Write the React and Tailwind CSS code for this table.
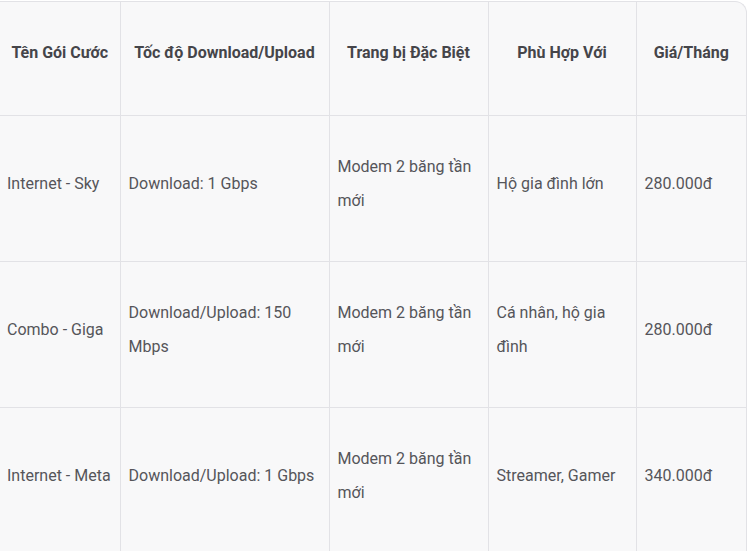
import React from 'react';

// --- TABLE DATA ---
const HEADERS = ['Tên Gói Cước', 'Tốc độ Download/Upload', 'Trang bị Đặc Biệt', 'Phù Hợp Với', 'Giá/Tháng'];

const ROWS = [
    ['Internet - Sky', 'Download: 1 Gbps', 'Modem 2 băng tần mới', 'Hộ gia đình lớn', '280.000đ'],
    ['Combo - Giga', 'Download/Upload: 150 Mbps', 'Modem 2 băng tần mới', 'Cá nhân, hộ gia đình', '280.000đ'],
    ['Internet - Meta', 'Download/Upload: 1 Gbps', 'Modem 2 băng tần mới', 'Streamer, Gamer', '340.000đ'],
];

const COL_WIDTHS = ['w-[120px]', 'w-[209px]', 'w-[159px]', 'w-[148px]', 'w-[110px]'];

const App = () => {
    return (
        <div className="w-[752px] h-[551px] bg-white overflow-hidden pt-px" style={{ fontFamily: 'Roboto, "Noto Sans", sans-serif' }}>
            <div className="w-[747px] bg-[#f8f8f9] border-t border-r border-[#e2e2e6] rounded-tr-xl overflow-hidden">
                <table className="w-[746px] border-collapse table-fixed">
                    <colgroup>
                        {COL_WIDTHS.map((w, i) => (
                            <col key={i} className={w} />
                        ))}
                    </colgroup>
                    <thead>
                        <tr className="h-[113px]">
                            {HEADERS.map((h, i) => (
                                <th
                                    key={i}
                                    className="border-b border-[#e2e2e6] border-l first:border-l-0 px-1 pb-[11px] text-center align-middle text-[16px] font-bold text-[#45454a]"
                                >
                                    {h}
                                </th>
                            ))}
                        </tr>
                    </thead>
                    <tbody>
                        {ROWS.map((row, r) => (
                            <tr key={r} className="h-[146px]">
                                {row.map((cell, c) => (
                                    <td
                                        key={c}
                                        className="border-b border-l first:border-l-0 border-[#e2e2e6] pl-2 pr-2 first:pl-[7px] first:pr-1 pb-[9px] align-middle text-left text-[16px] leading-[34px] text-[#55555a]"
                                    >
                                        {cell}
                                    </td>
                                ))}
                            </tr>
                        ))}
                    </tbody>
                </table>
            </div>
        </div>
    );
};

export default App;
